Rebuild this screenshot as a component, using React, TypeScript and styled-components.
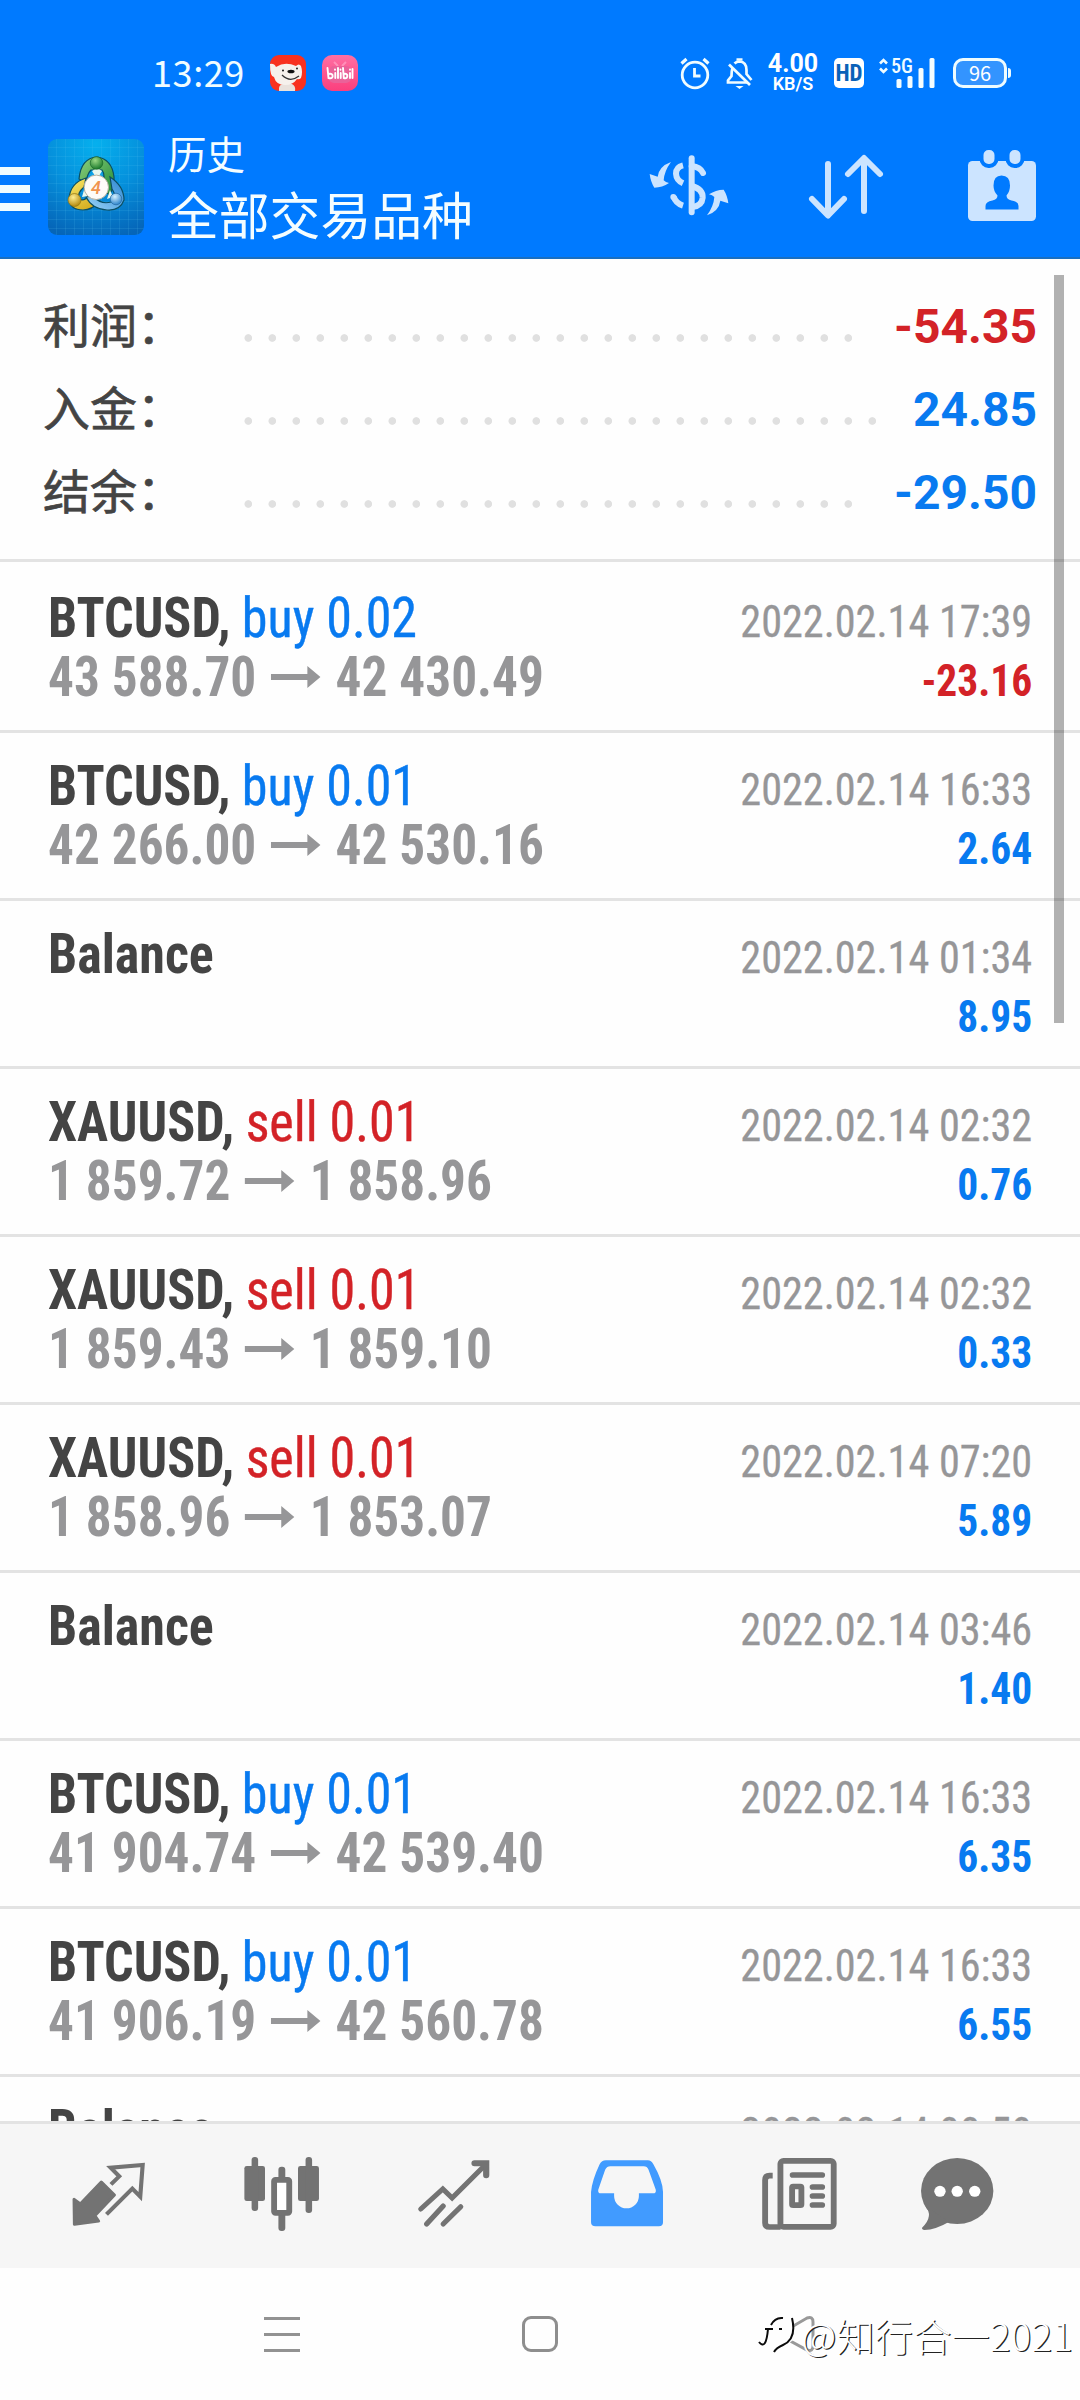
import React from "react";
import styled, { createGlobalStyle, css } from "styled-components";

const BLUE = "#007aff";
const VALUE_BLUE = "#087af0";
const RED = "#d32227";
const GREY = "#969698";
const INK = "#444444";
const ICON = "#737373";
const TINT = "#cce4ff";
const BAR = "#f6f6f6";

const GlobalStyle = createGlobalStyle`
  html, body { margin: 0; padding: 0; background: #fefefe; }
  * { box-sizing: border-box; }
  svg { display: block; flex: none; overflow: visible; }
`;

const Screen = styled.div`
  position: relative;
  display: flex;
  flex-direction: column;
  width: 1080px;
  height: 2400px;
  overflow: hidden;
  background: #fefefe;
  font-family: Roboto, "Noto Sans CJK SC", sans-serif;
`;

/* ---------- header ---------- */

const Header = styled.header`
  flex: none;
  height: 259px;
  background: ${BLUE};
  border-bottom: 2px solid #1a6fc0;
  color: #fff;
`;

const StatusBar = styled.div`
  display: flex;
  align-items: center;
  height: 126px;
  padding: 19px 69px 0 152px;
`;

const Clock = styled.span`
  width: 118px;
  padding-bottom: 4px;
  font: 400 36px/40px "Noto Sans CJK SC", sans-serif;
  letter-spacing: 0.6px;
  color: #f0fcff;
`;

const AppBadges = styled.div`
  display: flex;
  gap: 16px;
  margin-right: auto;
`;

const StatusIcons = styled.div`
  display: flex;
  align-items: center;
`;

const NetSpeed = styled.div`
  display: flex;
  flex-direction: column;
  align-items: center;
  gap: 2px;
  width: 52px;
  margin: 0 15px 0 14px;
  font-family: Roboto, sans-serif;
  font-weight: 700;
`;

const SpeedValue = styled.span`
  font-size: 25px;
  line-height: 19px;
`;

const SpeedUnit = styled.span`
  font-size: 18px;
  font-weight: 600;
  line-height: 17px;
`;

const HdBadge = styled.span`
  width: 30px;
  height: 30px;
  border-radius: 5px;
  background: #fff;
  color: #0a62b8;
  font: 700 23px/31px "Roboto Condensed", sans-serif;
  text-align: center;
`;

const Battery = styled.div`
  display: flex;
  align-items: center;
  justify-content: center;
  width: 54px;
  height: 30px;
  border: 3px solid #eefcff;
  border-radius: 10px;
  background: rgba(255, 255, 255, 0.2);
  font: 400 20px/24px "Noto Sans CJK SC", sans-serif;
`;

const BatteryTip = styled.span`
  width: 3px;
  height: 10px;
  margin-left: 1px;
  border-radius: 0 3px 3px 0;
  background: #eefcff;
`;

const TitleBar = styled.div`
  display: flex;
  align-items: flex-start;
  height: 131px;
  padding-right: 44px;
`;

const MenuButton = styled.div`
  display: flex;
  flex-direction: column;
  gap: 10px;
  width: 30px;
  margin: 41px 18px 0 0;
`;

const MenuBar = styled.span`
  height: 8px;
  background: #effcff;
`;

const LogoTile = styled.div`
  width: 96px;
  height: 96px;
  margin: 13px 24px 0 0;
`;

const Titles = styled.div`
  display: flex;
  flex-direction: column;
  margin-right: auto;
  font-family: "Noto Sans CJK SC", sans-serif;
  color: #f4fdff;
`;

const Caption = styled.span`
  font-size: 38.5px;
  line-height: 52px;
`;

const Title = styled.span`
  font-size: 50.8px;
  line-height: 70px;
`;

const Actions = styled.div`
  display: flex;
  align-items: flex-start;
  padding-top: 24px;
`;

const Action = styled.div<{ $gap?: number; $drop?: number }>`
  margin: ${(p) => p.$drop ?? 0}px ${(p) => p.$gap ?? 0}px 0 0;
`;

/* ---------- content ---------- */

const Content = styled.main`
  flex: none;
  height: 1862px;
  overflow: hidden;
`;

const Summary = styled.section`
  height: 303px;
  padding: 22px 43px 0;
  border-bottom: 3px solid #e3e3e3;
`;

const SummaryRow = styled.div`
  display: flex;
  align-items: baseline;
  height: 83px;
`;

const SummaryLabel = styled.span`
  width: 193px;
  font: 400 47px/83px "Noto Sans CJK SC", sans-serif;
  color: ${INK};
  -webkit-text-stroke: 0.7px ${INK};
`;

const Leader = styled.span`
  flex: 1;
  height: 9px;
  margin-right: 27px;
  background: radial-gradient(circle at 12.3px 4px, #e0e0e0 3.4px, transparent 4.2px) 0 0 / 24px 9px repeat-x;
`;

const SummaryValue = styled.span<{ $color: string }>`
  font: 700 48px/83px Roboto, sans-serif;
  color: ${(p) => p.$color};
`;

const Deals = styled.section`
  padding-top: 3px;
`;

const DealRow = styled.article`
  display: flex;
  justify-content: space-between;
  height: 168px;
  padding: 24px 48px 0 48px;
  border-bottom: 3px solid #e3e3e3;
`;

const column = css`
  display: flex;
  flex-direction: column;
  font-family: "Roboto Condensed", Roboto, sans-serif;
  line-height: 59px;
  white-space: nowrap;
`;

const DealMain = styled.div`
  ${column}
  align-items: flex-start;
  font-size: 55px;
`;

const DealMeta = styled.div`
  ${column}
  align-items: flex-end;
  padding-top: 3px;
  font-size: 45px;
`;

const DealTitle = styled.div`
  display: flex;
  gap: 12px;
  transform: scaleX(0.946);
  transform-origin: left;
`;

const Symbol = styled.span`
  font-weight: 700;
  color: ${INK};
`;

const Side = styled.span<{ $sell: boolean }>`
  color: ${(p) => (p.$sell ? RED : VALUE_BLUE)};
  -webkit-text-stroke: 0.4px currentColor;
`;

const Prices = styled.div`
  display: flex;
  align-items: center;
  gap: 16px;
  transform: scaleX(0.933);
  transform-origin: left;
  font-weight: 700;
  color: ${GREY};
`;

const DateText = styled.span`
  transform: scaleX(0.938);
  transform-origin: right;
  color: ${GREY};
  -webkit-text-stroke: 0.3px ${GREY};
`;

const Amount = styled.span<{ $loss: boolean }>`
  transform: scaleX(0.922);
  transform-origin: right;
  font-weight: 700;
  color: ${(p) => (p.$loss ? RED : VALUE_BLUE)};
`;

const Scrollbar = styled.div`
  position: absolute;
  top: 275px;
  right: 16px;
  width: 10px;
  height: 748px;
  background: rgba(0, 0, 0, 0.3);
`;

/* ---------- bottom ---------- */

const TabBar = styled.nav`
  display: flex;
  flex: none;
  height: 147px;
  padding: 0 0 5px 23px;
  border-top: 3px solid #e3e3e3;
  background: ${BAR};
`;

const Tab = styled.div<{ $width?: number }>`
  display: flex;
  align-items: center;
  justify-content: center;
  width: ${(p) => p.$width ?? 172.5}px;
`;

const SystemNav = styled.div`
  display: flex;
  align-items: center;
  height: 132px;
  padding: 0 0 0 264px;
`;

const Recents = styled.div`
  display: flex;
  flex-direction: column;
  gap: 13px;
  width: 36px;
  margin-right: 222px;
`;

const RecentsLine = styled.span`
  height: 3px;
  background: #929292;
`;

const Home = styled.div`
  width: 36px;
  height: 36px;
  margin-right: 221px;
  border: 3px solid #8e8e8e;
  border-radius: 9px;
`;

const Watermark = styled.div`
  position: absolute;
  right: 7px;
  bottom: 38px;
  display: flex;
  align-items: center;
  font: 300 38px/55px "Noto Sans CJK SC", sans-serif;
  letter-spacing: 0.4px;
  color: #fff;
  text-shadow: 1.2px 1.2px 0.4px #222;
`;

/* ---------- drawings ---------- */

const JdBadge = () => (
  <svg width="36" height="36" viewBox="0 0 36 36">
    <rect width="36" height="36" rx="9" fill="#f8311f" />
    <path d="M9 36q-1-6 4-7h9q4 2 3 7z" fill="#e9e2dc" />
    <path d="M0 9q4-1 6 3q9-6 20-1q3-3 5 0q2 6 0 12q-2 2-4 1q-4 6-12 6q-9 0-11-8q-4 0-4-13z" fill="#f6f1ec" />
    <path d="M12 20q8 8 17 1" fill="none" stroke="#333" strokeWidth="1.200" />
    <ellipse cx="21" cy="16.500" rx="3.600" ry="1.800" fill="#111" />
    <circle cx="13" cy="15.500" r="1" fill="#111" />
    <circle cx="27" cy="13.500" r="0.900" fill="#111" />
  </svg>
);

const BiliBadge = () => (
  <svg width="36" height="36" viewBox="0 0 36 36">
    <defs>
      <linearGradient id="bili" x1="0" y1="0" x2="0" y2="1">
        <stop offset="0" stopColor="#ff6fa3" />
        <stop offset="1" stopColor="#fb3f7d" />
      </linearGradient>
    </defs>
    <rect width="36" height="36" rx="10" fill="url(#bili)" />
    <path d="M12 7l4 4M24 7l-4 4" stroke="#ff8fb8" strokeWidth="2" />
    <rect x="7" y="11" width="22" height="17" rx="5" fill="#ea6299" />
    <g stroke="#fff" strokeWidth="1.900" fill="none" strokeLinecap="round">
      <path d="M5.500 13l1 10q5 1 4-3q-1-2-4-1M13.300 18v5M13 14.500v.2M16 13v10M18.700 18v5M18.500 14.500v.2" />
      <path d="M21 13l.8 10q4 1 3.500-3q-1-2-3.500-1M28 18v5M28 14.500v.2M30.500 14v9" />
    </g>
  </svg>
);

const AlarmIcon = () => (
  <svg width="30" height="32" viewBox="0 0 30 32" fill="none" stroke="#f0fcff" strokeWidth="2.8">
    <circle cx="15" cy="18" r="12.800" />
    <path d="M14.500 11v8h6" />
    <path d="M1.500 6.500l5-4.500M28.500 6.500l-5-4.500" strokeWidth="3.200" />
  </svg>
);

const MutedBellIcon = () => (
  <svg width="27" height="32" viewBox="0 0 27 32" fill="none" stroke="#f0fcff" strokeWidth="2.700">
    <path d="M6.500 11Q5.500 14 5.500 19L2 23.500V25.500H22" />
    <path d="M8.500 6.500Q10.500 4.500 13.500 4.500Q20.500 5 20.500 13V17L25.500 23" />
    <path d="M3 7.500L24 28" />
    <path d="M10.500 2.500h6" strokeWidth="2.500" />
    <path d="M9.500 29h8l-4 3z" fill="#f0fcff" stroke="none" />
  </svg>
);

const SignalIcon = () => (
  <svg width="58" height="32" viewBox="0 0 58 32">
    <path d="M2 6.500L5.500 3L9 6.500M2 11.500L5.500 15L9 11.500" fill="none" stroke="#f0fcff" strokeWidth="2.600" />
    <text x="13" y="16" fontFamily="Roboto Condensed" fontSize="20" fontWeight="500" fill="#f0fcff" textLength="22" lengthAdjust="spacingAndGlyphs">
      5G
    </text>
    <g fill="#f4fdff">
      <rect x="18.500" y="22" width="5" height="9" rx="1.500" />
      <rect x="29.500" y="19" width="5" height="12" rx="1.500" />
      <rect x="40.500" y="11" width="5" height="20" rx="1.500" />
      <rect x="51.500" y="1" width="5" height="30" rx="1.500" />
    </g>
  </svg>
);

const MetaTraderLogo = () => (
  <svg width="96" height="96" viewBox="0 0 96 96">
    <defs>
      <radialGradient id="tile" cx="0.5" cy="0.05" r="1">
        <stop offset="0" stopColor="#06b0ee" />
        <stop offset="0.5" stopColor="#0590dc" />
        <stop offset="1" stopColor="#0565b8" />
      </radialGradient>
      <pattern id="grid" width="9" height="9" patternUnits="userSpaceOnUse">
        <path d="M8.500 0V9M0 8.500H9" stroke="#5cc8f5" strokeOpacity="0.14" fill="none" />
      </pattern>
      <linearGradient id="green" x1="0" y1="0" x2="1" y2="1">
        <stop offset="0" stopColor="#8fd07c" />
        <stop offset="1" stopColor="#1f8a36" />
      </linearGradient>
      <linearGradient id="gold" x1="0" y1="0" x2="0.6" y2="1">
        <stop offset="0" stopColor="#fbe96a" />
        <stop offset="1" stopColor="#d3ad20" />
      </linearGradient>
      <linearGradient id="sky" x1="1" y1="0" x2="0" y2="1">
        <stop offset="0" stopColor="#2b86d2" />
        <stop offset="1" stopColor="#9ad4f8" />
      </linearGradient>
      <radialGradient id="ballG" cx="0.4" cy="0.3" r="0.7">
        <stop offset="0" stopColor="#9ad884" />
        <stop offset="1" stopColor="#1b7a2c" />
      </radialGradient>
      <radialGradient id="ballY" cx="0.4" cy="0.3" r="0.7">
        <stop offset="0" stopColor="#ffee90" />
        <stop offset="1" stopColor="#b58a10" />
      </radialGradient>
      <radialGradient id="ballB" cx="0.4" cy="0.3" r="0.7">
        <stop offset="0" stopColor="#d4f0ff" />
        <stop offset="1" stopColor="#2f86cc" />
      </radialGradient>
    </defs>
    <rect width="96" height="96" rx="9" fill="url(#tile)" />
    <rect width="96" height="96" rx="9" fill="url(#grid)" />
    <g stroke="#0c4f63" strokeWidth="1.200">
      <path d="M31 40Q33 19 49 18Q64 20 66 38Q67 48 61 56L54 47Q58 36 54 31H43Q39 35 38 44Z" fill="url(#green)" />
      <path d="M38 39Q22 44 21 60Q22 71 35 71Q44 71 51 63L42 56Q36 63 31 60Q29 54 36 48Z" fill="url(#gold)" />
      <path d="M62 38Q76 47 76 61Q72 72 59 71Q44 70 38 58L45 57Q53 66 63 63Q70 59 64 50Z" fill="url(#sky)" />
    </g>
    <path d="M44 32l5-3 5 3-3 5h-4zM34 58l2-7 4 6zM62 51l3 7-6 2z" fill="#e8f6ee" />
    <circle cx="48.500" cy="24" r="6.300" fill="url(#ballG)" stroke="#1c6a2a" strokeWidth="0.700" />
    <circle cx="26.500" cy="61" r="6.500" fill="url(#ballY)" stroke="#8f7412" strokeWidth="0.700" />
    <circle cx="68" cy="60" r="5.800" fill="url(#ballB)" stroke="#2467a0" strokeWidth="0.700" />
    <circle cx="48.300" cy="48.300" r="12.200" fill="#fdfbf8" stroke="#b5b0a0" strokeWidth="1" />
    <text x="48" y="54.800" textAnchor="middle" fontFamily="Roboto" fontSize="18" fontWeight="500" fontStyle="italic" fill="#f0934e">
      4
    </text>
  </svg>
);

const CurrencyIcon = () => {
  const arrow = "M96 65Q60 78 56 109L32 101Q35 125 46 142Q70 142 90 128Q80 126 74 120Q76 92 96 65Z";
  return (
    <svg width="80" height="64" viewBox="30 38 240 192" fill="none">
      <path d={arrow} fill={TINT} />
      <path d={arrow} fill={TINT} transform="rotate(180 150 145)" />
      <g stroke={TINT} strokeWidth="18">
        <path d="M158 54V216" strokeLinecap="round" />
        <path d="M192 98Q184 80 158 77" strokeLinecap="round" />
        <path d="M132 75Q111 80 111 100Q112 120 132 129" />
        <path d="M158 137Q192 146 191 172Q189 196 160 200" />
        <path d="M104 169Q110 189 132 196" />
      </g>
      <circle cx="103" cy="170" r="9" fill={TINT} />
    </svg>
  );
};

const SortIcon = () => (
  <svg width="76" height="68" viewBox="0 0 76 68" fill="none" stroke={TINT} strokeWidth="6" strokeLinecap="round" strokeLinejoin="round">
    <path d="M20 11V62M4 46L20 62.500L36 46" />
    <path d="M56 58V6M40 21L56 5L72 21" />
  </svg>
);

const CalendarIcon = () => (
  <svg width="68" height="72" viewBox="0 0 68 72">
    <rect x="0" y="11" width="68" height="60" rx="4.500" fill={TINT} />
    <g fill={TINT} stroke={BLUE} strokeWidth="4">
      <rect x="13.500" y="-2" width="15" height="18" rx="7" />
      <rect x="39.500" y="-2" width="15" height="18" rx="7" />
    </g>
    <path
      d="M33.500 25.500q8.500 0 8.500 10q0 6-3.500 10q0 4 5 5q7 1 7 5.500v3.500h-33v-3.500q0-4.500 7-5.500q5-1 5-5q-4-4-4-10q0-10 8-10z"
      fill={BLUE}
    />
  </svg>
);

const PriceArrow = () => (
  <svg width="53" height="24" viewBox="0 0 53 24" fill={GREY}>
    <path d="M0 8H39V0L53 11L39 22V14H0Z" />
  </svg>
);

const QuotesIcon = () => (
  <svg width="75.800" height="68" viewBox="210 300 220 204" preserveAspectRatio="none">
    <path d="M298 366L336 405L279 467L290 483L220 493L219 418L237 432Z" fill={ICON} stroke={ICON} strokeWidth="9" strokeLinejoin="round" />
    <path d="M326 373L350 349L325 323L418 315L411 410L388 386L313 463" fill="none" stroke={ICON} strokeWidth="12" />
  </svg>
);

const CandlesIcon = () => (
  <svg width="77" height="76" viewBox="705 288 224 228" preserveAspectRatio="none" fill={ICON}>
    <rect x="709" y="318" width="60" height="105" rx="7" />
    <rect x="730" y="291" width="19" height="162" rx="9" />
    <rect x="865" y="318" width="61" height="105" rx="7" />
    <rect x="887" y="291" width="19" height="168" rx="9" />
    <rect x="808" y="320" width="20" height="40" rx="9" />
    <rect x="808" y="455" width="20" height="58" rx="9" />
    <rect x="795.500" y="359.500" width="44" height="99" rx="4" fill="#fff" stroke={ICON} strokeWidth="17" />
  </svg>
);

const TrendIcon = () => (
  <svg width="73.700" height="68.700" viewBox="1210 296 214 206" preserveAspectRatio="none" fill="none" stroke={ICON} strokeWidth="15" strokeLinecap="round">
    <path d="M1221 446L1285 386L1312 413L1408 314" strokeLinejoin="miter" />
    <path d="M1377 309H1411V345" strokeWidth="18" />
    <path d="M1286 437L1238 491M1337 439L1286 491" />
  </svg>
);

const InboxIcon = () => (
  <svg width="74.400" height="68.700" viewBox="144 296 216 206" preserveAspectRatio="none">
    <path
      d="M190 300H312Q322 300 328 312Q355 360 356 395V486Q356 498 344 498H160Q147 498 147 486V395Q150 360 172 312Q178 300 190 300Z"
      fill="#419bff"
    />
    <path
      d="M203 318H300Q310 318 314 328L335 388Q337 399 327 399H286V407A36 37 0 0 1 214 407V399H176Q166 399 168 388L188 328Q193 318 203 318Z"
      fill={BAR}
    />
  </svg>
);

const NewsIcon = () => (
  <svg width="77" height="74" viewBox="643 288 224 222" preserveAspectRatio="none" fill="none" stroke={ICON} strokeWidth="17">
    <path d="M677 344H668Q655 344 655 357V486Q655 498 668 498H700" />
    <rect x="699.500" y="299.500" width="155" height="198" rx="9" />
    <path d="M735 342H821M793 378H821M793 405H821M793 432H821" strokeLinecap="round" />
    <rect x="733.500" y="376.500" width="27" height="56" rx="3" />
  </svg>
);

const ChatIcon = () => (
  <svg width="74.400" height="74" viewBox="1105 288 216 222" preserveAspectRatio="none">
    <ellipse cx="1213" cy="390" rx="105" ry="99" fill={ICON} />
    <path d="M1120 435Q1146 465 1111 500Q1110 506 1118 507Q1150 506 1190 482Z" fill={ICON} />
    <g fill="#fff">
      <circle cx="1163" cy="391" r="16.500" />
      <circle cx="1213" cy="391" r="16.500" />
      <circle cx="1264" cy="391" r="16.500" />
    </g>
  </svg>
);

const BackIcon = () => (
  <svg width="36" height="38" viewBox="0 0 36 38" fill="none" stroke="#999" strokeWidth="3">
    <path d="M4 17L28 3Q34 1 34 7V31Q34 37 28 35L4 22Q0 19 4 17Z" />
  </svg>
);

const WatermarkLogo = () => {
  const strokes = "M12 10Q16 2 24 3M6 14H14M20 14H23M0 27Q7 36 9 14M33 3Q38 24 24 30Q17 33 15 37";
  return (
    <svg width="42" height="40" viewBox="0 0 42 40" fill="none">
      <path d="M10 10L30 6L33 22L18 34L4 30Z" fill="#fefefe" stroke="#fefefe" strokeWidth="6" />
      <path d={strokes} stroke="#0a0a0a" strokeWidth="2" />
    </svg>
  );
};

/* ---------- data ---------- */

const summary = [
  { label: "利润：", value: "-54.35", color: RED },
  { label: "入金：", value: "24.85", color: VALUE_BLUE },
  { label: "结余：", value: "-29.50", color: VALUE_BLUE },
];

type Deal = {
  symbol: string;
  side?: "buy" | "sell";
  lots?: string;
  open?: string;
  close?: string;
  time: string;
  amount: string;
};

const deals: Deal[] = [
  { symbol: "BTCUSD", side: "buy", lots: "0.02", open: "43 588.70", close: "42 430.49", time: "2022.02.14 17:39", amount: "-23.16" },
  { symbol: "BTCUSD", side: "buy", lots: "0.01", open: "42 266.00", close: "42 530.16", time: "2022.02.14 16:33", amount: "2.64" },
  { symbol: "Balance", time: "2022.02.14 01:34", amount: "8.95" },
  { symbol: "XAUUSD", side: "sell", lots: "0.01", open: "1 859.72", close: "1 858.96", time: "2022.02.14 02:32", amount: "0.76" },
  { symbol: "XAUUSD", side: "sell", lots: "0.01", open: "1 859.43", close: "1 859.10", time: "2022.02.14 02:32", amount: "0.33" },
  { symbol: "XAUUSD", side: "sell", lots: "0.01", open: "1 858.96", close: "1 853.07", time: "2022.02.14 07:20", amount: "5.89" },
  { symbol: "Balance", time: "2022.02.14 03:46", amount: "1.40" },
  { symbol: "BTCUSD", side: "buy", lots: "0.01", open: "41 904.74", close: "42 539.40", time: "2022.02.14 16:33", amount: "6.35" },
  { symbol: "BTCUSD", side: "buy", lots: "0.01", open: "41 906.19", close: "42 560.78", time: "2022.02.14 16:33", amount: "6.55" },
  { symbol: "Balance", time: "2022.02.14 00:50", amount: "" },
];

export default function App() {
  return (
    <Screen>
      <GlobalStyle />
      <Header>
        <StatusBar>
          <Clock>13:29</Clock>
          <AppBadges>
            <JdBadge />
            <BiliBadge />
          </AppBadges>
          <StatusIcons>
            <AlarmIcon />
            <Action $gap={16} />
            <MutedBellIcon />
            <NetSpeed>
              <SpeedValue>4.00</SpeedValue>
              <SpeedUnit>KB/S</SpeedUnit>
            </NetSpeed>
            <HdBadge>HD</HdBadge>
            <Action $gap={14} />
            <SignalIcon />
            <Action $gap={17} />
            <Battery>96</Battery>
            <BatteryTip />
          </StatusIcons>
        </StatusBar>
        <TitleBar>
          <MenuButton>
            <MenuBar />
            <MenuBar />
            <MenuBar />
          </MenuButton>
          <LogoTile>
            <MetaTraderLogo />
          </LogoTile>
          <Titles>
            <Caption>历史</Caption>
            <Title>全部交易品种</Title>
          </Titles>
          <Actions>
            <Action $gap={79} $drop={3}>
              <CurrencyIcon />
            </Action>
            <Action $gap={84} $drop={3}>
              <SortIcon />
            </Action>
            <Action>
              <CalendarIcon />
            </Action>
          </Actions>
        </TitleBar>
      </Header>

      <Content>
        <Summary>
          {summary.map((s) => (
            <SummaryRow key={s.label}>
              <SummaryLabel>{s.label}</SummaryLabel>
              <Leader />
              <SummaryValue $color={s.color}>{s.value}</SummaryValue>
            </SummaryRow>
          ))}
        </Summary>
        <Deals>
          {deals.map((d, i) => (
            <DealRow key={i}>
              <DealMain>
                <DealTitle>
                  <Symbol>{d.side ? `${d.symbol},` : d.symbol}</Symbol>
                  {d.side && (
                    <Side $sell={d.side === "sell"}>
                      {d.side} {d.lots}
                    </Side>
                  )}
                </DealTitle>
                {d.open && (
                  <Prices>
                    <span>{d.open}</span>
                    <PriceArrow />
                    <span>{d.close}</span>
                  </Prices>
                )}
              </DealMain>
              <DealMeta>
                <DateText>{d.time}</DateText>
                <Amount $loss={d.amount.startsWith("-")}>{d.amount}</Amount>
              </DealMeta>
            </DealRow>
          ))}
        </Deals>
      </Content>
      <Scrollbar />

      <TabBar>
        <Tab>
          <QuotesIcon />
        </Tab>
        <Tab>
          <CandlesIcon />
        </Tab>
        <Tab>
          <TrendIcon />
        </Tab>
        <Tab>
          <InboxIcon />
        </Tab>
        <Tab>
          <NewsIcon />
        </Tab>
        <Tab $width={144}>
          <ChatIcon />
        </Tab>
      </TabBar>
      <SystemNav>
        <Recents>
          <RecentsLine />
          <RecentsLine />
          <RecentsLine />
        </Recents>
        <Home />
        <BackIcon />
      </SystemNav>
      <Watermark>
        <WatermarkLogo />
        <span>@知行合一2021</span>
      </Watermark>
    </Screen>
  );
}
